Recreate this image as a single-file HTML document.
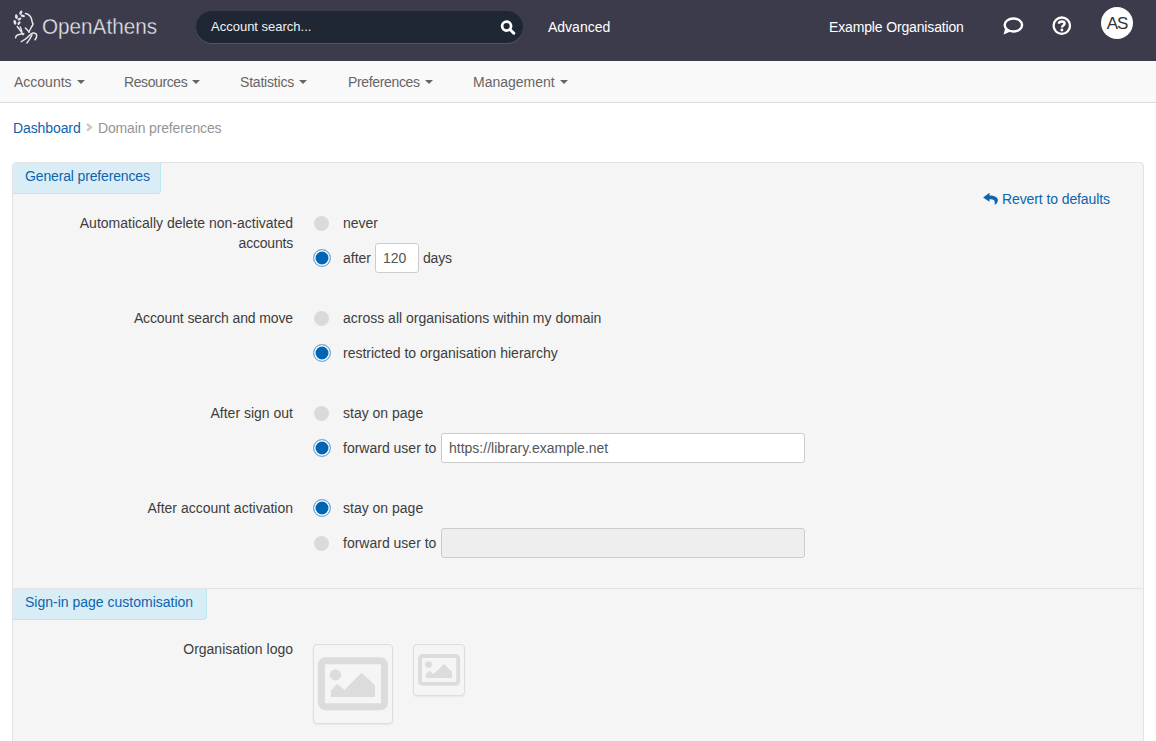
<!DOCTYPE html>
<html>
<head>
<meta charset="utf-8">
<style>
*{box-sizing:border-box;}
html,body{margin:0;padding:0;width:1156px;height:741px;overflow:hidden;background:#fff;font-family:"Liberation Sans",sans-serif;font-size:14px;color:#333;}
.abs{position:absolute;white-space:nowrap;}
#hdr{position:absolute;left:0;top:0;width:1156px;height:61px;background:#3c3b4c;}
#search{position:absolute;left:196px;top:11px;width:327px;height:32px;border-radius:16px;background:#1e2733;box-shadow:0 1px 0 #565467;}
#nav{position:absolute;left:0;top:61px;width:1156px;height:42px;background:#f9f9f9;border-bottom:1px solid #dcdcdc;}
.nv{position:absolute;top:1px;line-height:41px;color:#666;font-size:14px;white-space:nowrap;}
.caret{display:inline-block;width:0;height:0;border-left:4px solid transparent;border-right:4px solid transparent;border-top:4px solid #666;vertical-align:middle;margin-left:5px;margin-top:-2px;letter-spacing:0;}
#panel{position:absolute;left:12px;top:162px;width:1132px;height:600px;background:#f5f5f5;border:1px solid #e3e3e3;border-radius:4px;}
.tab{position:absolute;left:0;height:31px;background:#d9edf7;border-bottom:1px solid #bce8f1;border-right:1px solid #bce8f1;border-bottom-right-radius:4px;color:#0e64ad;line-height:26px;padding-left:12px;white-space:nowrap;}
.lbl{position:absolute;right:863px;white-space:nowrap;line-height:20px;text-align:right;color:#3d3d3d;}
.radio{position:absolute;left:314px;width:15px;height:15px;border-radius:50%;background:#d9dadb;}
.radio.on{background:#0066b3;border:1.5px solid #7db0dc;box-shadow:inset 0 0 0 1.5px #fff;width:18px;height:18px;left:313px;}
.opt{position:absolute;left:343px;white-space:nowrap;line-height:20px;color:#3d3d3d;}
.inp{position:absolute;background:#fff;border:1px solid #ccc;border-radius:3px;font-family:"Liberation Sans",sans-serif;font-size:14px;color:#555;padding-left:7px;line-height:28px;}
.inp.dis{background:#eee;}
.logo{position:absolute;border:1px solid #ddd;border-radius:4px;background:#f5f5f5;box-shadow:0 1px 2px rgba(0,0,0,.06);}
</style>
</head>
<body>
<div id="hdr">
  <!-- logo figure -->
  <svg class="abs" style="left:10px;top:8px" width="30" height="38" viewBox="0 0 30 38">
    <g fill="#e6e6ea">
      <ellipse cx="10.8" cy="4.6" rx="1.3" ry="2.3" transform="rotate(25 10.8 4.6)"/>
      <ellipse cx="6.4" cy="8.7" rx="1.4" ry="2.4" transform="rotate(-10 6.4 8.7)"/>
      <ellipse cx="12.8" cy="7.9" rx="2.2" ry="1.2" transform="rotate(10 12.8 7.9)"/>
      <ellipse cx="9.5" cy="11" rx="2.1" ry="1.2" transform="rotate(-30 9.5 11)"/>
      <ellipse cx="4.9" cy="14.4" rx="1.4" ry="2.4" transform="rotate(-15 4.9 14.4)"/>
      <ellipse cx="9" cy="15.1" rx="2.1" ry="1.2" transform="rotate(-55 9 15.1)"/>
    </g>
    <g fill="none" stroke="#e6e6ea" stroke-width="1.5" stroke-linecap="round">
      <path d="M15.4 5.4 C18 5.8 20.3 7.5 21.3 10.2 C22 12.5 21.8 14 23 15.9 C22.8 17.8 21.4 18.6 20.8 20.2 C20.2 21.6 19.4 22.6 19 24"/>
      <path d="M15.4 20 C16.8 21.5 18.2 22.5 19 24.1"/>
      <path d="M7.2 18.5 C9 21 11.5 23.5 13.1 26.7"/>
      <path d="M10.3 19 C11 20.5 11.5 22 11.8 23.6"/>
      <path d="M5.6 29.7 C5.8 27.5 7 26.6 9 26.4 C10.8 26.2 12.3 26 13.8 25.8"/>
      <path d="M11.3 33.6 C15 32 18.5 29 21.5 25.6"/>
      <path d="M16.9 34.9 C19 32.5 20.8 29.5 22 26.7"/>
      <path d="M22.6 25.1 C24.8 24.8 26.6 25.8 26.7 27.2 C26.8 29 26 30.5 25.1 31.8"/>
    </g>
  </svg>
  <svg class="abs" style="left:40px;top:10px" width="122" height="34" viewBox="0 0 122 34">
    <text x="2" y="23.8" font-family="Liberation Sans" font-size="22.4" fill="#e6e6ea" stroke="#3c3b4c" stroke-width="0.35" textLength="115" lengthAdjust="spacingAndGlyphs">OpenAthens</text>
  </svg>
  <div id="search"></div>
  <div class="abs" style="left:211px;top:18px;color:#f2f2f2;font-size:13px;line-height:18px">Account search...</div>
  <svg class="abs" style="left:496px;top:15px" width="24" height="24" viewBox="0 0 24 24">
    <circle cx="10.6" cy="11.1" r="4.5" fill="none" stroke="#fff" stroke-width="2.7"/>
    <path d="M14 14.5 L17.8 18.2" stroke="#fff" stroke-width="3" stroke-linecap="round"/>
  </svg>
  <div class="abs" style="left:548px;top:18px;color:#fff;font-size:14px;line-height:18px">Advanced</div>
  <div class="abs" style="left:829px;top:18px;color:#fff;font-size:14px;line-height:18px;letter-spacing:-0.15px">Example Organisation</div>
  <!-- chat -->
  <svg class="abs" style="left:998px;top:12px" width="30" height="28" viewBox="0 0 30 28">
    <ellipse cx="15.4" cy="13" rx="8.7" ry="6.5" fill="none" stroke="#fff" stroke-width="2.4"/>
    <path d="M7.2 16.3 L9.8 17.8 L12.5 19.6 L5.6 22.4 Z" fill="#fff"/>
  </svg>
  <!-- help -->
  <svg class="abs" style="left:1048px;top:12px" width="28" height="28" viewBox="0 0 28 28">
    <circle cx="13.8" cy="13.7" r="8.2" fill="none" stroke="#fff" stroke-width="2.3"/>
    <path d="M10.9 11.8 C10.9 10.2 12.1 9.4 13.8 9.4 C15.5 9.4 16.6 10.3 16.6 11.6 C16.6 13.3 14 13.5 14 15.6" fill="none" stroke="#fff" stroke-width="2.5"/>
    <circle cx="13.9" cy="18" r="1.45" fill="#fff"/>
  </svg>
  <div class="abs" style="left:1101px;top:7px;width:32px;height:32px;border-radius:50%;background:#fff;color:#333;text-align:center;line-height:33px;font-size:17px;letter-spacing:-1px;text-indent:0px">AS</div>
</div>

<div id="nav">
  <div class="nv" style="left:14px">Accounts<span class="caret"></span></div>
  <div class="nv" style="left:124px;letter-spacing:-0.4px">Resources<span class="caret"></span></div>
  <div class="nv" style="left:240px;letter-spacing:-0.2px">Statistics<span class="caret"></span></div>
  <div class="nv" style="left:348px;letter-spacing:-0.35px">Preferences<span class="caret"></span></div>
  <div class="nv" style="left:473px">Management<span class="caret"></span></div>
</div>

<div class="abs" style="left:13px;top:119px;line-height:18px;color:#0e64ad;letter-spacing:-0.1px">Dashboard</div>
<svg class="abs" style="left:85px;top:123px" width="8" height="10" viewBox="0 0 8 10"><path d="M2 0.9 L6 4.3 L2 7.7" fill="none" stroke="#c8c8c8" stroke-width="2.3"/></svg>
<div class="abs" style="left:98px;top:119px;line-height:18px;color:#959595;letter-spacing:-0.15px">Domain preferences</div>

<div id="panel">
  <div class="tab" style="top:0;width:148px;border-top-left-radius:3px;letter-spacing:-0.15px">General preferences</div>
  <div style="position:absolute;left:0;top:425px;width:1130px;height:1px;background:#e3e3e3"></div>
  <div class="tab" style="top:426px;width:194px">Sign-in page customisation</div>
</div>

<!-- revert -->
<svg class="abs" style="left:980px;top:189px" width="22" height="19" viewBox="0 0 22 19">
  <path d="M3.1 8.5 L9.5 3.8 L9.5 6.4 C14 6.4 18.3 8 17.9 11.6 C17.7 13.5 16.5 14.8 15.4 15.6 L14.6 15.4 C14.8 14 14.9 12.8 14.4 11.8 C13.7 10.7 12 10.3 9.5 10.3 L9.5 12.8 Z" fill="#0e64ad"/>
</svg>
<div class="abs" style="left:1002px;top:190px;line-height:18px;color:#0e64ad;letter-spacing:-0.1px">Revert to defaults</div>

<div class="lbl" style="top:213px">Automatically delete non-activated</div>
<div class="lbl" style="top:233px;letter-spacing:-0.2px">accounts</div>
<div class="radio" style="top:215.6px"></div><div class="opt" style="top:213px">never</div>
<div class="radio on" style="top:249px"></div><div class="opt" style="top:248px">after</div>
<div class="inp" style="left:375px;top:243px;width:44px;height:30px;padding-left:7px">120</div>
<div class="opt" style="left:423px;top:248px;letter-spacing:-0.2px">days</div>

<div class="lbl" style="top:308px;letter-spacing:-0.12px">Account search and move</div>
<div class="radio" style="top:310.6px"></div><div class="opt" style="top:308px">across all organisations within my domain</div>
<div class="radio on" style="top:344px"></div><div class="opt" style="top:343px">restricted to organisation hierarchy</div>

<div class="lbl" style="top:403px">After sign out</div>
<div class="radio" style="top:405.6px"></div><div class="opt" style="top:403px">stay on page</div>
<div class="radio on" style="top:439px"></div><div class="opt" style="top:438px">forward user to</div>
<div class="inp" style="left:441px;top:433px;width:364px;height:30px">https://library.example.net</div>

<div class="lbl" style="top:498px">After account activation</div>
<div class="radio on" style="top:499px"></div><div class="opt" style="top:498px">stay on page</div>
<div class="radio" style="top:535.6px"></div><div class="opt" style="top:533px">forward user to</div>
<div class="inp dis" style="left:441px;top:528px;width:364px;height:30px"></div>

<div class="lbl" style="top:639px">Organisation logo</div>
<div class="logo" style="left:313px;top:644px;width:80px;height:80px">
  <svg style="position:absolute;left:-1px;top:-1px" width="80" height="80" viewBox="0 0 80 80">
    <rect x="8.4" y="16.7" width="63.1" height="46.1" rx="4" fill="none" stroke="#dcdcdc" stroke-width="7"/>
    <circle cx="22.5" cy="30.9" r="5.6" fill="#dcdcdc"/>
    <path d="M17.8 53 L17.8 46.5 L24.4 39.7 L31.4 46 L48.5 28.8 L62 41.3 L62 53 Z" fill="#dcdcdc"/>
  </svg>
</div>
<div class="logo" style="left:413px;top:644px;width:52px;height:52px">
  <svg style="position:absolute;left:-1px;top:-1px" width="52" height="51" viewBox="0 0 52 51">
    <rect x="7" y="12" width="38.2" height="27.9" rx="2.5" fill="none" stroke="#dcdcdc" stroke-width="3.8"/>
    <circle cx="15.5" cy="20.6" r="3.4" fill="#dcdcdc"/>
    <path d="M12.9 34 L12.9 30 L16.6 26.8 L20.6 30 L31.1 20 L38.9 27.7 L38.9 34 Z" fill="#dcdcdc"/>
  </svg>
</div>
</body>
</html>
